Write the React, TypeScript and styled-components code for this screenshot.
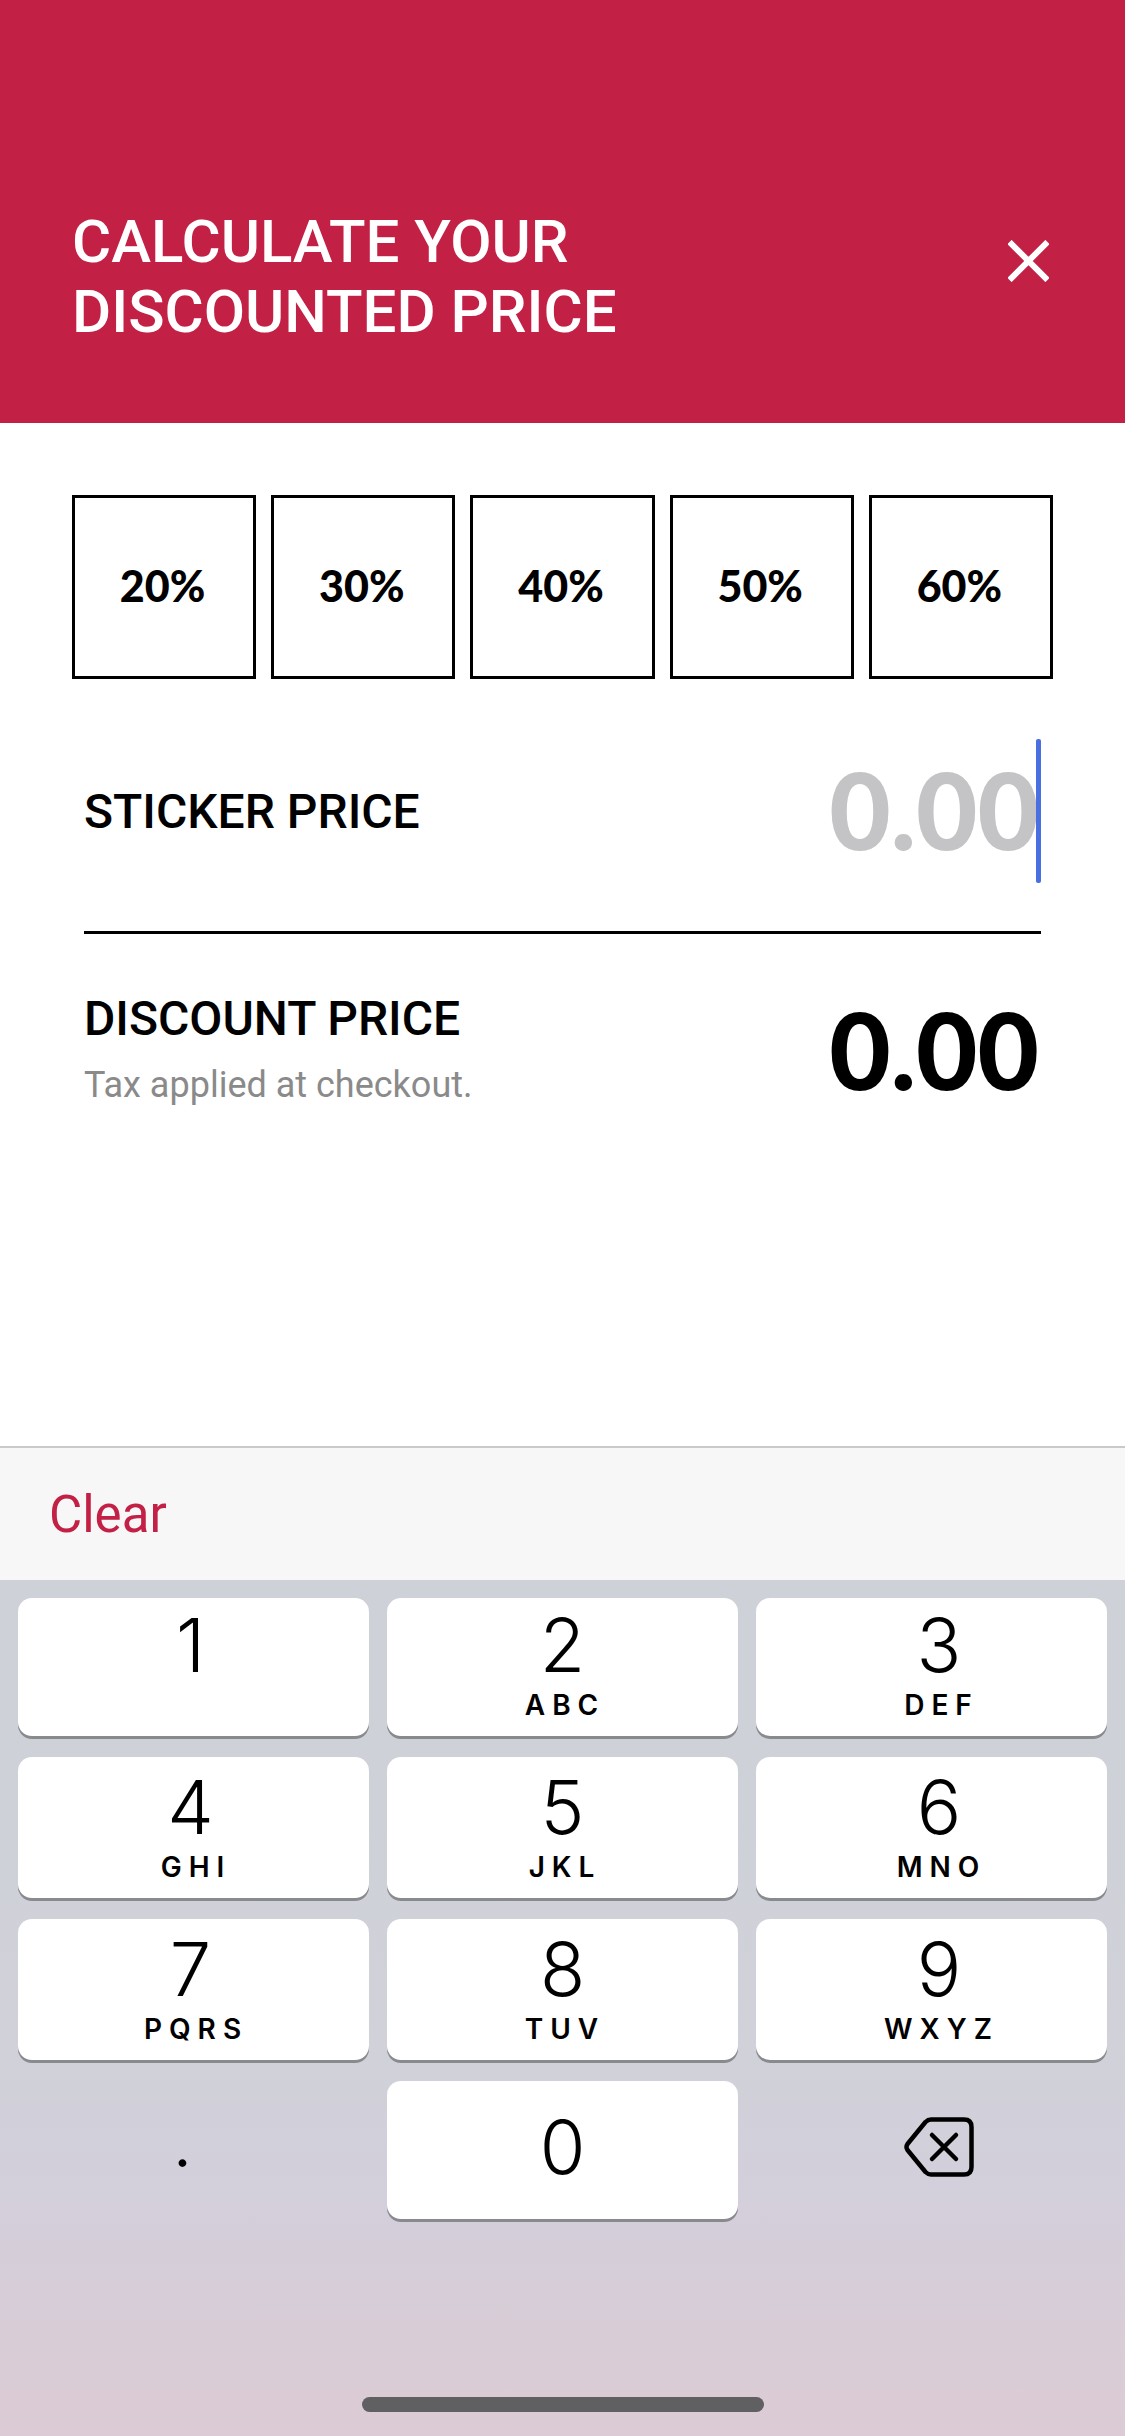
import React from 'react';
import styled, { createGlobalStyle } from 'styled-components';

const GlobalStyle = createGlobalStyle`
  html, body {
    margin: 0;
    padding: 0;
    background: #fff;
  }
  * {
    box-sizing: border-box;
  }
`;

const Page = styled.div`
  width: 1125px;
  height: 2436px;
  display: flex;
  flex-direction: column;
  overflow: hidden;
  background: #fff;
  font-family: Roboto, 'Liberation Sans', sans-serif;
`;

const Header = styled.header`
  height: 423px;
  flex: none;
  background: #c32046;
  color: #fff;
  display: flex;
  justify-content: space-between;
  align-items: flex-start;
  padding: 207px 76px 0 72px;
`;

const Title = styled.h1`
  margin: 0;
  font-size: 60px;
  line-height: 70px;
  font-weight: 500;
`;

const CloseButton = styled.div`
  margin-top: 33px;
  width: 41px;
  height: 42px;
  svg {
    display: block;
  }
`;

const Chips = styled.div`
  display: grid;
  grid-template-columns: repeat(5, 1fr);
  gap: 15px;
  padding: 72px 72px 0;
`;

const Chip = styled.div`
  height: 184px;
  border: 3px solid #000;
  padding: 0 3px 3px 0;
  display: flex;
  align-items: center;
  justify-content: center;
  font-family: Lato, sans-serif;
  font-weight: 900;
  font-size: 43px;
  color: #000;
`;

const Row = styled.div<{ $divided?: boolean }>`
  margin: 0 84px;
  display: flex;
  justify-content: space-between;
  align-items: center;
  border-bottom: ${(p) => (p.$divided ? '3px solid #000' : 'none')};
`;

const StickerRow = styled(Row)`
  height: 255px;
  padding-top: 14px;
`;

const DiscountRow = styled(Row)`
  padding-top: 57px;
`;

const Label = styled.div`
  font-size: 48px;
  line-height: 56px;
  font-weight: 500;
  color: #000;
`;

const Hint = styled.div`
  margin-top: 16px;
  font-size: 36px;
  line-height: 44px;
  color: #8a8a8a;
`;

const Amount = styled.div<{ $muted?: boolean }>`
  position: relative;
  margin-right: 2px;
  font-family: Lato, sans-serif;
  font-weight: 900;
  font-size: 106px;
  line-height: 110px;
  color: ${(p) => (p.$muted ? '#c4c4c6' : '#000')};
`;

const StickerAmount = styled(Amount)`
  margin-bottom: 6px;
`;

const Caret = styled.span`
  position: absolute;
  right: -2px;
  top: -15px;
  width: 5px;
  height: 144px;
  border-radius: 2px;
  background: #4a6fe0;
`;

const Spacer = styled.div`
  flex: 1;
`;

const Toolbar = styled.div`
  height: 134px;
  flex: none;
  background: #f7f7f7;
  border-top: 2px solid #c9c9cb;
  display: flex;
  align-items: center;
  padding-left: 49px;
  font-size: 51px;
  color: #c32046;
`;

const Keyboard = styled.div`
  height: 856px;
  flex: none;
  padding: 18px 18px 0;
  background: linear-gradient(#ced1d7 0%, #d0d1d9 55%, #d3cfdb 72%, #dccbd4 100%);
  display: flex;
  flex-direction: column;
  font-family: Inter, sans-serif;
  color: #000;
`;

const Digit = styled.div`
  font-size: 74px;
  line-height: 84px;
  font-weight: 350;
`;

const Letters = styled.div`
  margin-top: 3px;
  margin-right: -5px;
  font-size: 28px;
  line-height: 30px;
  font-weight: 600;
  letter-spacing: 7px;
`;

const Key = styled.div<{ $bare?: boolean }>`
  display: flex;
  flex-direction: column;
  align-items: center;
  padding-top: 8px;
  border-radius: 14px;
  background: ${(p) => (p.$bare ? 'transparent' : '#fff')};
  box-shadow: ${(p) => (p.$bare ? 'none' : '0 3px 0 #898a8e')};
`;

const KeyGrid = styled.div`
  display: grid;
  grid-template-columns: repeat(3, 351px);
  grid-template-rows: 138px 141px 141px 138px;
  column-gap: 18px;
  row-gap: 21px;

  > :nth-child(-n + 3) {
    padding-top: 5px;
  }
  > :nth-child(3n) {
    padding-left: 15px;
  }
  > :nth-child(3n + 1) ${Digit} {
    margin-right: 6px;
  }
`;

const ZeroKey = styled(Key)`
  padding-top: 24px;
`;

const DotKey = styled(Key)`
  padding-top: 17px;
  padding-right: 16px;
`;

const BackKey = styled(Key)`
  padding-top: 36px;
`;

const HomeBar = styled.div`
  width: 402px;
  height: 15px;
  margin: auto auto 24px;
  border-radius: 8px;
  background: #606063;
`;

const keys = [
  ['1', ''],
  ['2', 'ABC'],
  ['3', 'DEF'],
  ['4', 'GHI'],
  ['5', 'JKL'],
  ['6', 'MNO'],
  ['7', 'PQRS'],
  ['8', 'TUV'],
  ['9', 'WXYZ'],
];

const discounts = ['20%', '30%', '40%', '50%', '60%'];

export default function App() {
  return (
    <Page>
      <GlobalStyle />
      <Header>
        <Title>
          CALCULATE YOUR
          <br />
          DISCOUNTED PRICE
        </Title>
        <CloseButton>
          <svg width="41" height="42" viewBox="0 0 41 42" fill="none" stroke="#fff" strokeWidth="6">
            <path d="M1.5 2 L39.5 40 M39.5 2 L1.5 40" />
          </svg>
        </CloseButton>
      </Header>
      <Chips>
        {discounts.map((d) => (
          <Chip key={d}>{d}</Chip>
        ))}
      </Chips>
      <StickerRow $divided>
        <Label>STICKER PRICE</Label>
        <StickerAmount $muted>
          0.00
          <Caret />
        </StickerAmount>
      </StickerRow>
      <DiscountRow>
        <div>
          <Label>DISCOUNT PRICE</Label>
          <Hint>Tax applied at checkout.</Hint>
        </div>
        <Amount>0.00</Amount>
      </DiscountRow>
      <Spacer />
      <Toolbar>Clear</Toolbar>
      <Keyboard>
        <KeyGrid>
          {keys.map(([digit, letters]) => (
            <Key key={digit}>
              <Digit>{digit}</Digit>
              <Letters>{letters}</Letters>
            </Key>
          ))}
          <DotKey $bare>
            <Digit>.</Digit>
          </DotKey>
          <ZeroKey>
            <Digit>0</Digit>
          </ZeroKey>
          <BackKey $bare>
            <svg width="70" height="60" viewBox="0 0 70 60" fill="none" stroke="#000" strokeWidth="4.5" strokeLinejoin="round" strokeLinecap="round">
              <path d="M27 2.5 H60 Q67.5 2.5 67.5 10 V50 Q67.5 57.5 60 57.5 H27 Q24 57.5 21.5 55 L3.5 33 Q1.5 30 3.5 27 L21.5 5 Q24 2.5 27 2.5 Z" />
              <path d="M28 18 L52 42 M52 18 L28 42" />
            </svg>
          </BackKey>
        </KeyGrid>
        <HomeBar />
      </Keyboard>
    </Page>
  );
}
